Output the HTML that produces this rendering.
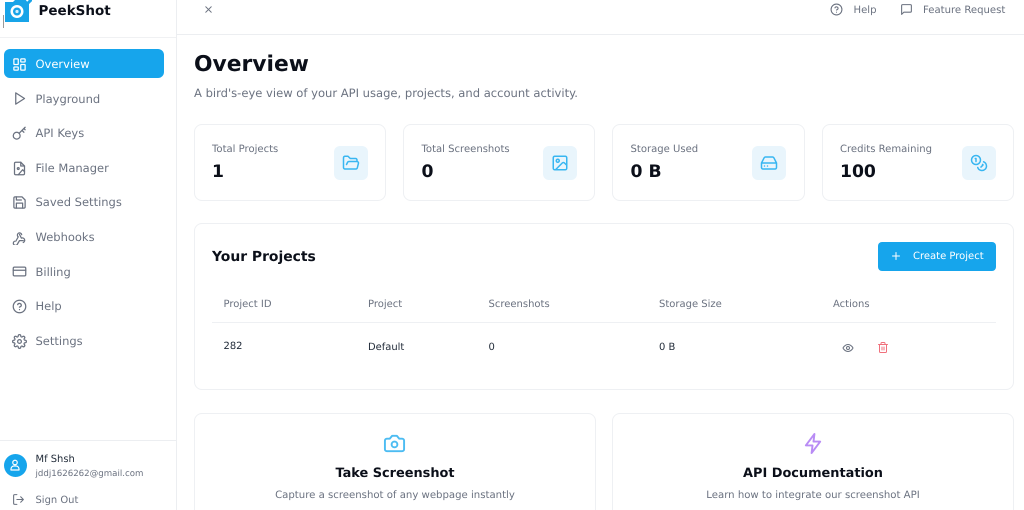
<!DOCTYPE html>
<html><head><meta charset="utf-8">
<style>
html,body{margin:0;padding:0;background:#fff}
#p{position:relative;width:1024px;height:510px;overflow:hidden;background:#fff;font-family:"DejaVu Sans",sans-serif;text-rendering:geometricPrecision;filter:blur(0.35px)}
#p div,#p span.t{position:absolute;white-space:nowrap}
.t{position:absolute;white-space:nowrap;line-height:16px}
svg{position:absolute;fill:none;stroke-linecap:round;stroke-linejoin:round}
.nav{font-size:11.5px;color:#6b7280;left:35.5px}
.ic{stroke:#6b7280;stroke-width:2}
.card{border:1px solid #eef0f3;border-radius:8px;background:#fff;box-sizing:border-box}
.lbl{font-size:10.05px;color:#6b7280}
.val{font-size:17.2px;font-weight:700;color:#0b0f19;line-height:20px}
.box{width:34px;height:34px;background:#e9f5fc;border-radius:6px}
.blue{stroke:#38b6f1;stroke-width:2}
.th{font-size:10px;color:#6b7280}
.td{font-size:9.95px;color:#1f2937}
</style></head><body><div id="p">
<div style="left:176px;top:0;width:1px;height:510px;background:#eceef1"></div>
<div style="left:0;top:37px;width:176px;height:1px;background:#f0f1f3"></div>
<div style="left:177px;top:34px;width:847px;height:1px;background:#eceef1"></div>
<div style="left:0;top:440px;width:176px;height:1px;background:#eceef1"></div>
<div style="left:3px;top:15px;width:1px;height:13px;background:#999"></div>

<svg style="left:4px;top:-4px" width="28" height="28" viewBox="0 0 28 28"><path d="M1 6h8l3-3h9l4 5v18H1z" fill="#18a4e8"/><circle cx="13" cy="15.5" r="6.5" fill="#fff"/><circle cx="13" cy="15.5" r="4" fill="#18a4e8"/><circle cx="13" cy="15.5" r="1.6" fill="#d8effb"/><path d="M24 7l3-3" stroke="#18a4e8" stroke-width="3"/></svg>
<span class="t" style="left:38.5px;top:3px;font-size:13.5px;font-weight:700;color:#0b0f19">PeekShot</span>

<div style="left:4px;top:49px;width:160px;height:29px;background:#16a5ec;border-radius:6px"></div>
<svg style="left:12px;top:56.5px" width="15" height="15" viewBox="0 0 24 24" stroke="#fff" stroke-width="2"><rect x="3" y="3" width="7" height="9" rx="1"/><rect x="14" y="3" width="7" height="5" rx="1"/><rect x="14" y="12" width="7" height="9" rx="1"/><rect x="3" y="16" width="7" height="5" rx="1"/></svg>
<span class="t nav" style="top:55.5px;color:#fff">Overview</span>

<svg class="ic" style="left:11.5px;top:90.5px" width="15" height="15" viewBox="0 0 24 24"><path d="M6 3l14 9-14 9z"/></svg>
<span class="t nav" style="top:90.5px">Playground</span>
<svg class="ic" style="left:11.5px;top:125.5px" width="15" height="15" viewBox="0 0 24 24"><circle cx="7.5" cy="15.5" r="5.5"/><path d="M11.5 11.5L21 2M16 7l3 3M19 4l2 2"/></svg>
<span class="t nav" style="top:125px">API Keys</span>
<svg class="ic" style="left:11.5px;top:160.5px" width="15" height="15" viewBox="0 0 24 24"><path d="M14 2H6a2 2 0 0 0-2 2v16a2 2 0 0 0 2 2h12a2 2 0 0 0 2-2V8z"/><path d="M14 2v6h6"/><circle cx="10" cy="12" r="1.5"/><path d="M20 17l-3-3-7 8"/></svg>
<span class="t nav" style="top:159.5px">File Manager</span>
<svg class="ic" style="left:11.5px;top:194.5px" width="15" height="15" viewBox="0 0 24 24"><path d="M5 3h11l5 5v11a2 2 0 0 1-2 2H5a2 2 0 0 1-2-2V5a2 2 0 0 1 2-2z"/><path d="M17 21v-8H7v8M7 3v5h8"/></svg>
<span class="t nav" style="top:194px">Saved Settings</span>
<svg class="ic" style="left:11.5px;top:229.5px" width="15" height="15" viewBox="0 0 24 24"><path d="M18 17H12l-3 5a3.5 3.5 0 1 1-5-4"/><path d="M6 18l4-7a3.5 3.5 0 1 1 5.5-3.5"/><path d="M12 7l3 6a3.5 3.5 0 1 1 3 7"/></svg>
<span class="t nav" style="top:229px">Webhooks</span>
<svg class="ic" style="left:11.5px;top:263.5px" width="15" height="15" viewBox="0 0 24 24"><rect x="2" y="5" width="20" height="14" rx="2"/><path d="M2 10h20"/></svg>
<span class="t nav" style="top:263.5px">Billing</span>
<svg class="ic" style="left:11.5px;top:298.5px" width="15" height="15" viewBox="0 0 24 24"><circle cx="12" cy="12" r="10"/><path d="M9.1 9a3 3 0 0 1 5.8 1c0 2-3 3-3 3M12 17h.01"/></svg>
<span class="t nav" style="top:298px">Help</span>
<svg class="ic" style="left:11.5px;top:333.5px" width="15" height="15" viewBox="0 0 24 24"><circle cx="12" cy="12" r="3"/><path d="M19.4 15a1.7 1.7 0 0 0 .3 1.8l.1.1a2 2 0 1 1-2.9 2.9l-.1-.1a1.7 1.7 0 0 0-2.8 1.2V21a2 2 0 1 1-4 0v-.1a1.7 1.7 0 0 0-2.9-1.2l-.1.1a2 2 0 1 1-2.8-2.9l.1-.1a1.7 1.7 0 0 0-1.2-2.8H3a2 2 0 1 1 0-4h.1a1.7 1.7 0 0 0 1.2-2.9l-.1-.1a2 2 0 1 1 2.9-2.8l.1.1a1.7 1.7 0 0 0 1.8.3H9a1.7 1.7 0 0 0 1-1.5V3a2 2 0 1 1 4 0v.1a1.7 1.7 0 0 0 2.9 1.2l.1-.1a2 2 0 1 1 2.8 2.9l-.1.1a1.7 1.7 0 0 0-.3 1.8V9a1.7 1.7 0 0 0 1.5 1H21a2 2 0 1 1 0 4h-.1a1.7 1.7 0 0 0-1.5 1z"/></svg>
<span class="t nav" style="top:332.5px">Settings</span>

<div style="left:3.5px;top:453.5px;width:23px;height:23px;border-radius:50%;background:#16a5ec"></div>
<svg style="left:9px;top:459px" width="12" height="12" viewBox="0 0 24 24" stroke="#fff" stroke-width="2.4"><circle cx="12" cy="7" r="4.5"/><path d="M4 22v-2a6 6 0 0 1 6-6h4a6 6 0 0 1 6 6v2z"/></svg>
<span class="t" style="left:35.5px;top:452px;font-size:9.95px;color:#1f2937">Mf Shsh</span>
<span class="t" style="left:35.5px;top:466px;font-size:8.65px;color:#6b7280">jddj1626262@gmail.com</span>
<svg class="ic" style="left:12px;top:493px" width="13" height="13" viewBox="0 0 24 24"><path d="M9 21H5a2 2 0 0 1-2-2V5a2 2 0 0 1 2-2h4M16 17l5-5-5-5M21 12H9"/></svg>
<span class="t" style="left:35.5px;top:493px;font-size:9.95px;color:#6b7280">Sign Out</span>

<svg style="left:203px;top:4px" width="11" height="11" viewBox="0 0 24 24" stroke="#6b7280" stroke-width="2"><path d="M18 6L6 18M6 6l12 12"/></svg>
<svg style="left:830px;top:3px" width="13" height="13" viewBox="0 0 24 24" stroke="#6b7280" stroke-width="2"><circle cx="12" cy="12" r="10"/><path d="M9.1 9a3 3 0 0 1 5.8 1c0 2-3 3-3 3M12 17h.01"/></svg>
<span class="t" style="left:853.5px;top:2.5px;font-size:10.1px;color:#6b7280">Help</span>
<svg style="left:899.5px;top:3px" width="13" height="13" viewBox="0 0 24 24" stroke="#6b7280" stroke-width="2"><path d="M21 15a2 2 0 0 1-2 2H7l-4 4V5a2 2 0 0 1 2-2h14a2 2 0 0 1 2 2z"/></svg>
<span class="t" style="left:923px;top:2.5px;font-size:10.1px;color:#6b7280">Feature Request</span>

<span class="t" style="left:194px;top:51px;font-size:21.8px;font-weight:700;color:#0b0f19;line-height:28px">Overview</span>
<span class="t" style="left:194px;top:84.8px;font-size:11.56px;color:#6b7280">A bird's-eye view of your API usage, projects, and account activity.</span>

<div class="card" style="left:194px;top:124px;width:192px;height:77px"></div>
<div class="card" style="left:403px;top:124px;width:192px;height:77px"></div>
<div class="card" style="left:612px;top:124px;width:193px;height:77px"></div>
<div class="card" style="left:822px;top:124px;width:192px;height:77px"></div>
<span class="t lbl" style="left:212px;top:142px">Total Projects</span>
<span class="t lbl" style="left:421.5px;top:142px">Total Screenshots</span>
<span class="t lbl" style="left:630.5px;top:142px">Storage Used</span>
<span class="t lbl" style="left:840px;top:142px">Credits Remaining</span>
<span class="t val" style="left:212px;top:162px">1</span>
<span class="t val" style="left:421.5px;top:162px">0</span>
<span class="t val" style="left:630.5px;top:162px">0 B</span>
<span class="t val" style="left:840px;top:162px">100</span>
<div class="box" style="left:334px;top:146px"></div>
<div class="box" style="left:543px;top:146px"></div>
<div class="box" style="left:752px;top:146px"></div>
<div class="box" style="left:962px;top:146px"></div>
<svg class="blue" style="left:342px;top:154px" width="18" height="18" viewBox="0 0 24 24"><path d="M6 14l1.5-3a2 2 0 0 1 1.8-1H20a2 2 0 0 1 1.9 2.5l-1.5 6a2 2 0 0 1-2 1.5H4a2 2 0 0 1-2-2V5a2 2 0 0 1 2-2h4l3 3h7a2 2 0 0 1 2 2v2"/></svg>
<svg class="blue" style="left:551px;top:154px" width="18" height="18" viewBox="0 0 24 24"><rect x="3" y="3" width="18" height="18" rx="2"/><circle cx="9" cy="9" r="2"/><path d="M21 15l-3-3a2 2 0 0 0-3 0L6 21"/></svg>
<svg class="blue" style="left:760px;top:154px" width="18" height="18" viewBox="0 0 24 24"><path d="M22 12H2M5.5 5.1L2 12v6a2 2 0 0 0 2 2h16a2 2 0 0 0 2-2v-6l-3.5-6.9A2 2 0 0 0 16.8 4H7.2a2 2 0 0 0-1.7 1.1zM6 16h.01M10 16h.01"/></svg>
<svg class="blue" style="left:970px;top:154px" width="18" height="18" viewBox="0 0 24 24"><circle cx="8" cy="8" r="6"/><path d="M18.1 10.4A6 6 0 1 1 10.3 18M7 6h1v4M16.7 13.9l.7.7-2.8 2.8"/></svg>

<div class="card" style="left:194px;top:223px;width:820px;height:167px"></div>
<span class="t" style="left:212px;top:248.5px;font-size:13.9px;font-weight:700;color:#0b0f19">Your Projects</span>
<div style="left:878px;top:242px;width:118px;height:29px;background:#16a5ec;border-radius:4px"></div>
<svg style="left:890px;top:250px" width="12" height="12" viewBox="0 0 24 24" stroke="#fff" stroke-width="2"><path d="M12 5v14M5 12h14"/></svg>
<span class="t" style="left:913px;top:249px;font-size:10px;color:#fff">Create Project</span>
<span class="t th" style="left:223.5px;top:297px">Project ID</span>
<span class="t th" style="left:368px;top:297px">Project</span>
<span class="t th" style="left:488.5px;top:297px">Screenshots</span>
<span class="t th" style="left:659px;top:297px">Storage Size</span>
<span class="t th" style="left:833px;top:297px">Actions</span>
<div style="left:212px;top:322px;width:784px;height:1px;background:#eef0f3"></div>
<span class="t td" style="left:223.5px;top:338.5px">282</span>
<span class="t td" style="left:368px;top:339.5px">Default</span>
<span class="t td" style="left:488.5px;top:339.5px">0</span>
<span class="t td" style="left:659px;top:339.5px">0 B</span>
<svg style="left:842px;top:342px" width="12" height="12" viewBox="0 0 24 24" stroke="#6b7280" stroke-width="2"><path d="M2 12s3.5-7 10-7 10 7 10 7-3.5 7-10 7-10-7-10-7z"/><circle cx="12" cy="12" r="3"/></svg>
<svg style="left:877px;top:341px" width="12" height="13" viewBox="0 0 24 24" stroke="#f0707c" stroke-width="2"><path d="M3 6h18M19 6v14a2 2 0 0 1-2 2H7a2 2 0 0 1-2-2V6M8 6V4a2 2 0 0 1 2-2h4a2 2 0 0 1 2 2v2M10 11v6M14 11v6"/></svg>

<div class="card" style="left:194px;top:413px;width:402px;height:120px"></div>
<div class="card" style="left:612px;top:413px;width:402px;height:120px"></div>
<svg style="left:383px;top:432px" width="23" height="23" viewBox="0 0 24 24" stroke="#4cbcf2" stroke-width="2"><path d="M14.5 4h-5L7 7H4a2 2 0 0 0-2 2v9a2 2 0 0 0 2 2h16a2 2 0 0 0 2-2V9a2 2 0 0 0-2-2h-3z"/><circle cx="12" cy="13" r="3"/></svg>
<svg style="left:802px;top:432px" width="23" height="23" viewBox="0 0 24 24" stroke="#b98cf5" stroke-width="2"><path d="M13 2L4 14h7l-1 8 9-12h-7z"/></svg>
<span class="t" style="left:195px;width:400px;text-align:center;top:465.5px;font-size:12.9px;font-weight:700;color:#0b0f19">Take Screenshot</span>
<span class="t" style="left:613px;width:400px;text-align:center;top:465.5px;font-size:12.9px;font-weight:700;color:#0b0f19">API Documentation</span>
<span class="t" style="left:195px;width:400px;text-align:center;top:488px;font-size:10.15px;color:#6b7280">Capture a screenshot of any webpage instantly</span>
<span class="t" style="left:613px;width:400px;text-align:center;top:488px;font-size:10.15px;color:#6b7280">Learn how to integrate our screenshot API</span>
</div></body></html>
